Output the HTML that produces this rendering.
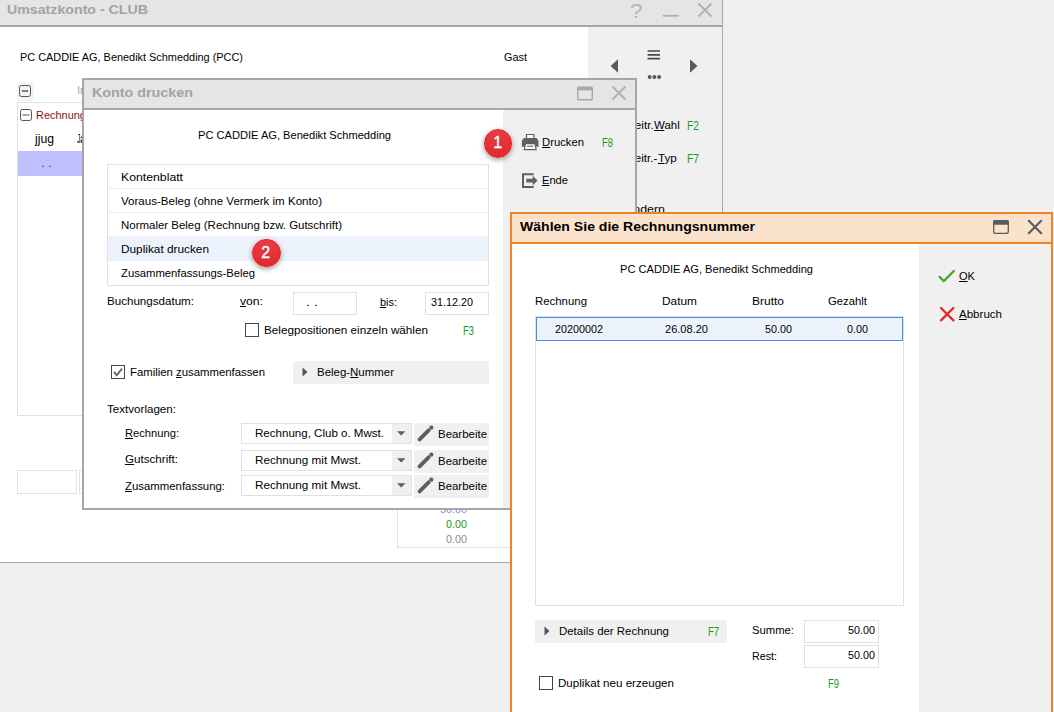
<!DOCTYPE html>
<html lang="de"><head><meta charset="utf-8"><title>Umsatzkonto - CLUB</title>
<style>
html,body{margin:0;padding:0}
body{width:1054px;height:712px;overflow:hidden;background:#f0f0f0;position:relative;font-family:"Liberation Sans", sans-serif;font-size:11px;color:#000}
.b{position:absolute;box-sizing:border-box}
.t{position:absolute;white-space:pre;transform-origin:0 0}
.layer{position:absolute;left:0;top:0;width:1054px;height:712px;overflow:hidden}
.clip{position:absolute;overflow:hidden}
u{text-decoration:underline;text-underline-offset:1px}
.badge{position:absolute;box-sizing:border-box;width:28.6px;height:28.6px;border-radius:50%;border:1.6px solid #f71818;background:linear-gradient(#e63c42,#dd2c33);box-shadow:0 2px 5px rgba(0,0,0,.38);color:#fff;text-align:center}
.badge i{position:absolute;left:0;top:0;width:51px;height:51px;font-style:normal;font-weight:400;-webkit-text-stroke:.7px #fff;font-size:32px;line-height:51px;transform:scale(.5);transform-origin:0 0}
</style></head><body>
<div class="layer" id="main">
<div class="b" style="left:0px;top:0px;width:723px;height:563px;background:#fff;"></div>
<div class="b" style="left:0px;top:0px;width:722px;height:25px;background:#e5e5e5;"></div>
<div class="b" style="left:0px;top:25px;width:723px;height:2px;background:#a6a6a6;"></div>
<div class="b" style="left:722px;top:0px;width:1px;height:563px;background:#a8a8a8;"></div>
<div class="b" style="left:0px;top:562px;width:723px;height:1px;background:#a8a8a8;"></div>
<div class="b" style="left:588px;top:27px;width:134px;height:535px;background:#f0f0f0;"></div>
<svg class="b" style="left:620px;top:0" width="100" height="25" viewBox="0 0 100 25"><text x="10" y="18" font-size="21" fill="#b4b4b4" textLength="12.5" lengthAdjust="spacingAndGlyphs" font-family='"Liberation Sans",sans-serif'>?</text><path d="M43 15.8 H58.8" stroke="#b0b0b0" stroke-width="1.8" fill="none"/><path d="M78.5 3.5 L91.5 16.5 M91.5 3.5 L78.5 16.5" stroke="#b0b0b0" stroke-width="1.9" fill="none"/></svg>
<div class="b" style="left:17px;top:82px;width:17px;height:19px;background:#f4f4f4;"></div>
<div class="b" style="left:17px;top:102px;width:383px;height:314px;background:#fff;border:1px solid #e2e2e2;"></div>
<svg class="b" style="left:18px;top:84px" width="14" height="14" viewBox="0 0 14 14"><rect x="1.5" y="1.5" width="11" height="11" rx="2" fill="#f4f4f4" stroke="#555" stroke-width="1"/><path d="M3.8 7 H10.2" stroke="#707070" stroke-width="1.8"/></svg>
<svg class="b" style="left:19px;top:108px" width="14" height="14" viewBox="0 0 14 14"><rect x="1.5" y="1.5" width="11" height="11" rx="2" fill="#fff" stroke="#555" stroke-width="1"/><path d="M3.4 7 H10.6" stroke="#a4a4a4" stroke-width="1.9"/></svg>
<div class="b" style="left:18px;top:151px;width:182px;height:24.5px;background:#c0c0ff;"></div>
<div class="b" style="left:17px;top:470px;width:60px;height:24px;background:#fff;border:1px solid #e2e2e2;"></div>
<div class="b" style="left:79px;top:470px;width:61px;height:24px;background:#fff;border:1px solid #e2e2e2;"></div>
<div class="b" style="left:397px;top:480px;width:163px;height:68px;background:#fff;border:1px solid #e2e2e2;"></div>
<svg class="b" style="left:600px;top:40px" width="110" height="50" viewBox="0 0 110 50"><path d="M18 19.2 V32.8 L10.6 26 Z" fill="#5a5a5a"/><path d="M90 19.2 V32.8 L97.4 26 Z" fill="#5a5a5a"/><path d="M47.6 11 H60 M47.6 14.8 H60 M47.6 18.6 H60" stroke="#484848" stroke-width="1.7"/><circle cx="49.7" cy="37" r="2" fill="#5a5a5a"/><circle cx="54.4" cy="37" r="2" fill="#5a5a5a"/><circle cx="59.1" cy="37" r="2" fill="#5a5a5a"/></svg>
<span class="t" style="left:7px;top:0.00px;font-size:12.5px;line-height:20px;color:#a3a3a3;font-weight:700;transform:scaleX(1.1342);">Umsatzkonto - CLUB</span>
<span class="t" style="left:20px;top:49.00px;font-size:11px;line-height:16px;transform:scaleX(0.9912);">PC CADDIE AG, Benedikt Schmedding (PCC)</span>
<span class="t" style="left:504px;top:49.00px;font-size:11px;line-height:16px;transform:scaleX(0.9899);">Gast</span>
<span class="t" style="left:76.5px;top:82.00px;font-size:11px;line-height:16px;color:#a8a8a8;transform:scaleX(1.0215);">Inhalt</span>
<span class="t" style="left:35.5px;top:107.00px;font-size:11px;line-height:16px;color:#8a0f0f;transform:scaleX(0.9953);">Rechnungen</span>
<span class="t" style="left:35px;top:131.00px;font-size:12px;line-height:16px;transform:scaleX(1.0167);">jjug</span>
<span class="t" style="left:76.6px;top:131.00px;font-size:12px;line-height:16px;transform:scaleX(0.5667);">J</span>
<span class="t" style="left:80.4px;top:131.00px;font-size:12px;line-height:16px;transform:scaleX(1.0148);">ahr</span>
<span class="t" style="left:41px;top:155.00px;font-size:11px;line-height:16px;color:#2020e0;transform:scaleX(1.1993);">. .</span>
<span class="t" style="left:627px;top:117.00px;font-size:11px;line-height:16px;transform:scaleX(1.0647);">Beitr.</span>
<span class="t" style="left:654px;top:117.00px;font-size:11px;line-height:16px;transform:scaleX(1.0417);"><u>W</u>ahl</span>
<span class="t" style="left:687px;top:116.00px;font-size:12.5px;line-height:20px;color:#1a9a1a;transform:scaleX(0.8223);">F2</span>
<span class="t" style="left:627px;top:150.00px;font-size:11px;line-height:16px;transform:scaleX(1.0580);">Beitr.-</span>
<span class="t" style="left:657.6px;top:150.00px;font-size:11px;line-height:16px;transform:scaleX(1.0592);"><u>T</u>yp</span>
<span class="t" style="left:687px;top:149.00px;font-size:12.5px;line-height:20px;color:#1a9a1a;transform:scaleX(0.8223);">F7</span>
<span class="t" style="left:625px;top:201.00px;font-size:11px;line-height:16px;transform:scaleX(1.1273);">Ändern</span>
<span class="t" style="left:440px;top:501.00px;font-size:11px;line-height:16px;color:#8c8ce0;transform:scaleX(0.9807);">50.00</span>
<span class="t" style="left:446px;top:516.00px;font-size:11px;line-height:16px;color:#1a9a1a;transform:scaleX(0.9803);">0.00</span>
<span class="t" style="left:446px;top:531.00px;font-size:11px;line-height:16px;color:#8a8a8a;transform:scaleX(0.9803);">0.00</span>
</div>
<div class="layer" id="d1">
<div class="b" style="left:82px;top:78px;width:555px;height:432px;background:#a6a6a6;"></div>
<div class="b" style="left:84px;top:80px;width:551px;height:27.7px;background:#e5e5e5;"></div>
<div class="b" style="left:84px;top:109.7px;width:419px;height:398.3px;background:#fff;"></div>
<div class="b" style="left:503px;top:109.7px;width:132px;height:398.3px;background:#f0f0f0;"></div>
<svg class="b" style="left:570px;top:79.5px" width="64" height="27" viewBox="0 0 64 27"><rect x="7.7" y="7.2" width="14.6" height="12.6" rx="1" fill="none" stroke="#a8a8a8" stroke-width="1.4"/><rect x="7.7" y="7.2" width="14.6" height="3.2" fill="#a8a8a8"/><path d="M42.5 6.5 L55.5 19.5 M55.5 6.5 L42.5 19.5" stroke="#b0b0b0" stroke-width="1.9" fill="none"/></svg>
<div class="b" style="left:107px;top:164px;width:382px;height:122px;background:#fff;border:1px solid #e0e0e0;"></div>
<div class="b" style="left:108px;top:188px;width:380px;height:1px;background:#ececec;"></div>
<div class="b" style="left:108px;top:212px;width:380px;height:1px;background:#ececec;"></div>
<div class="b" style="left:108px;top:236px;width:380px;height:1px;background:#ececec;"></div>
<div class="b" style="left:108px;top:260px;width:380px;height:1px;background:#ececec;"></div>
<div class="b" style="left:108px;top:236px;width:380px;height:25px;background:#ebf2fc;"></div>
<div class="b" style="left:293px;top:292px;width:64px;height:23px;background:#fff;border:1px solid #e0e0e0;"></div>
<div class="b" style="left:425px;top:292px;width:64px;height:23px;background:#fff;border:1px solid #e0e0e0;"></div>
<div class="b" style="left:245px;top:323px;width:14px;height:14px;background:#fff;border:1px solid #444;"></div>
<div class="b" style="left:111px;top:365px;width:14px;height:14px;background:#fff;border:1px solid #444;"></div>
<svg class="b" style="left:111px;top:365px" width="14" height="14" viewBox="0 0 14 14"><path d="M3 7 L5.8 10.2 L11 3.6" stroke="#6a6a6a" stroke-width="1.9" fill="none"/></svg>
<div class="b" style="left:293px;top:361px;width:196px;height:23px;background:#f0f0f0;"></div>
<svg class="b" style="left:300px;top:366px" width="10" height="12" viewBox="0 0 10 12"><path d="M2.5 1.5 V10.5 L7.5 6 Z" fill="#555"/></svg>
<div class="b" style="left:241px;top:423px;width:171px;height:21px;background:#fff;border:1px solid #e0e0e0;"></div>
<div class="b" style="left:392px;top:424px;width:19px;height:19px;background:#f0f0f0;"></div>
<svg class="b" style="left:396px;top:430px" width="12" height="8" viewBox="0 0 12 8"><path d="M1 1.2 H9.4 L5.2 5.6 Z" fill="#5e5e5e"/></svg>
<div class="clip" style="left:414px;top:423px;width:75px;height:23px;background:#f0f0f0">
<svg class="b" style="left:2.1px;top:1.4px" width="20" height="20" viewBox="0 0 20 20"><path d="M3.6 15.4 L12.6 6.4" stroke="#5e5e5e" stroke-width="3.9" stroke-linecap="round" fill="none"/><circle cx="15.3" cy="3.7" r="2.1" fill="#5e5e5e"/></svg>
<div class="b" style="left:-414px;top:-423px;width:0;height:0"><span class="t" style="left:438px;top:426.00px;font-size:11px;line-height:16px;transform:scaleX(1.0405);">Bearbeite</span></div>
</div>
<div class="b" style="left:241px;top:450px;width:171px;height:21px;background:#fff;border:1px solid #e0e0e0;"></div>
<div class="b" style="left:392px;top:451px;width:19px;height:19px;background:#f0f0f0;"></div>
<svg class="b" style="left:396px;top:457px" width="12" height="8" viewBox="0 0 12 8"><path d="M1 1.2 H9.4 L5.2 5.6 Z" fill="#5e5e5e"/></svg>
<div class="clip" style="left:414px;top:450px;width:75px;height:23px;background:#f0f0f0">
<svg class="b" style="left:2.1px;top:1.4px" width="20" height="20" viewBox="0 0 20 20"><path d="M3.6 15.4 L12.6 6.4" stroke="#5e5e5e" stroke-width="3.9" stroke-linecap="round" fill="none"/><circle cx="15.3" cy="3.7" r="2.1" fill="#5e5e5e"/></svg>
<div class="b" style="left:-414px;top:-450px;width:0;height:0"><span class="t" style="left:438px;top:453.00px;font-size:11px;line-height:16px;transform:scaleX(1.0405);">Bearbeite</span></div>
</div>
<div class="b" style="left:241px;top:475px;width:171px;height:21px;background:#fff;border:1px solid #e0e0e0;"></div>
<div class="b" style="left:392px;top:476px;width:19px;height:19px;background:#f0f0f0;"></div>
<svg class="b" style="left:396px;top:482px" width="12" height="8" viewBox="0 0 12 8"><path d="M1 1.2 H9.4 L5.2 5.6 Z" fill="#5e5e5e"/></svg>
<div class="clip" style="left:414px;top:475px;width:75px;height:23px;background:#f0f0f0">
<svg class="b" style="left:2.1px;top:1.4px" width="20" height="20" viewBox="0 0 20 20"><path d="M3.6 15.4 L12.6 6.4" stroke="#5e5e5e" stroke-width="3.9" stroke-linecap="round" fill="none"/><circle cx="15.3" cy="3.7" r="2.1" fill="#5e5e5e"/></svg>
<div class="b" style="left:-414px;top:-475px;width:0;height:0"><span class="t" style="left:438px;top:478.00px;font-size:11px;line-height:16px;transform:scaleX(1.0405);">Bearbeite</span></div>
</div>
<svg class="b" style="left:521px;top:133px" width="19" height="19" viewBox="0 0 19 19"><path d="M5.5 1.5 H12.9 V6 H5.5 Z" fill="#fff" stroke="#606060" stroke-width="1.2"/><path d="M0.9 13.8 V8.4 Q0.9 7.5 1.5 6.8 L3 5 H15.4 L16.9 6.8 Q17.5 7.5 17.5 8.4 V13.8 Z" fill="#606060"/><path d="M4.6 10.6 H13.8 L15.2 16.6 H3.2 Z" fill="#fff" stroke="#606060" stroke-width="1.1"/><path d="M6 13.2 H12.4" stroke="#606060" stroke-width="1.1"/></svg>
<svg class="b" style="left:521px;top:172px" width="19" height="19" viewBox="0 0 19 19"><path d="M12.7 2.2 H2 V15 H12.7" fill="none" stroke="#606060" stroke-width="2"/><path d="M5.3 6.8 H11.7 V3.8 L16.5 8.6 L11.7 13.4 V10.4 H5.3 Z" fill="#606060"/></svg>
<span class="t" style="left:91.7px;top:83.00px;font-size:12.5px;line-height:20px;color:#a3a3a3;font-weight:700;transform:scaleX(1.1451);">Konto drucken</span>
<span class="t" style="left:198px;top:127.00px;font-size:11px;line-height:16px;transform:scaleX(1.0085);">PC CADDIE AG, Benedikt Schmedding</span>
<span class="t" style="left:121px;top:169.00px;font-size:11px;line-height:16px;transform:scaleX(1.1140);">Kontenblatt</span>
<span class="t" style="left:121px;top:193.00px;font-size:11px;line-height:16px;transform:scaleX(1.0503);">Voraus-Beleg (ohne Vermerk im Konto)</span>
<span class="t" style="left:121px;top:217.00px;font-size:11px;line-height:16px;transform:scaleX(1.0417);">Normaler Beleg (Rechnung bzw. Gutschrift)</span>
<span class="t" style="left:121px;top:241.00px;font-size:11px;line-height:16px;transform:scaleX(1.0740);">Duplikat drucken</span>
<span class="t" style="left:121px;top:265.00px;font-size:11px;line-height:16px;transform:scaleX(1.0241);">Zusammenfassungs-Beleg</span>
<span class="t" style="left:107px;top:293.00px;font-size:11px;line-height:16px;transform:scaleX(1.0537);">Buchungsdatum:</span>
<span class="t" style="left:240px;top:293.00px;font-size:11px;line-height:16px;transform:scaleX(1.1059);"><u>v</u>on:</span>
<span class="t" style="left:305.5px;top:294.00px;font-size:11px;line-height:16px;transform:scaleX(1.3083);">. .</span>
<span class="t" style="left:380px;top:294.00px;font-size:11px;line-height:16px;transform:scaleX(0.9927);"><u>b</u>is:</span>
<span class="t" style="left:431px;top:294.00px;font-size:11px;line-height:16px;transform:scaleX(0.9807);">31.12.20</span>
<span class="t" style="left:264px;top:322.00px;font-size:11px;line-height:16px;transform:scaleX(1.0641);">Belegpositionen einzeln wählen</span>
<span class="t" style="left:463px;top:321.00px;font-size:12.5px;line-height:20px;color:#1a9a1a;transform:scaleX(0.7537);">F3</span>
<span class="t" style="left:130px;top:364.00px;font-size:11px;line-height:16px;transform:scaleX(1.0318);">Familien <u>z</u>usammenfassen</span>
<span class="t" style="left:317px;top:364.00px;font-size:11px;line-height:16px;transform:scaleX(1.0408);">Beleg-<u>N</u>ummer</span>
<span class="t" style="left:107px;top:401.00px;font-size:11px;line-height:16px;transform:scaleX(1.0544);">Textvorlagen:</span>
<span class="t" style="left:125px;top:425.00px;font-size:11px;line-height:16px;transform:scaleX(1.0147);"><u>R</u>echnung:</span>
<span class="t" style="left:125px;top:451.00px;font-size:11px;line-height:16px;transform:scaleX(1.0570);"><u>G</u>utschrift:</span>
<span class="t" style="left:125px;top:478.00px;font-size:11px;line-height:16px;transform:scaleX(1.0349);"><u>Z</u>usammenfassung:</span>
<span class="t" style="left:255px;top:425.00px;font-size:11px;line-height:16px;transform:scaleX(1.0497);">Rechnung, Club o. Mwst.</span>
<span class="t" style="left:255px;top:452.00px;font-size:11px;line-height:16px;transform:scaleX(1.0637);">Rechnung mit Mwst.</span>
<span class="t" style="left:255px;top:477.00px;font-size:11px;line-height:16px;transform:scaleX(1.0637);">Rechnung mit Mwst.</span>
<span class="t" style="left:542px;top:134.00px;font-size:11px;line-height:16px;transform:scaleX(1.0248);"><u>D</u>rucken</span>
<span class="t" style="left:602px;top:133.00px;font-size:12.5px;line-height:20px;color:#1a9a1a;transform:scaleX(0.7537);">F8</span>
<span class="t" style="left:542px;top:172.00px;font-size:11px;line-height:16px;transform:scaleX(1.0116);"><u>E</u>nde</span>
<div class="badge" style="left:483.8px;top:129px"><i>1</i></div>
<div class="badge" style="left:252.1px;top:238.9px"><i>2</i></div>
</div>
<div class="layer" id="d2">
<div class="b" style="left:510px;top:212px;width:543px;height:508px;background:#ef8420;"></div>
<div class="b" style="left:512px;top:214px;width:539px;height:27.8px;background:#fbe2cc;"></div>
<div class="b" style="left:512px;top:244px;width:407px;height:476px;background:#fff;"></div>
<div class="b" style="left:919px;top:244px;width:132px;height:476px;background:#f0f0f0;"></div>
<svg class="b" style="left:986px;top:214px" width="64" height="27" viewBox="0 0 64 27"><rect x="7.7" y="6.7" width="14.6" height="12.6" rx="1.6" fill="none" stroke="#5c5c5c" stroke-width="1.3"/><path d="M7.7 10 V8.3 Q7.7 6.7 9.3 6.7 H20.7 Q22.3 6.7 22.3 8.3 V10 Z" fill="#5c5c5c" stroke="#5c5c5c" stroke-width="1.3"/><path d="M42.8 6.8 L55.2 19.2 M55.2 6.8 L42.8 19.2" stroke="#5c5c5c" stroke-width="2.2" stroke-linecap="round" fill="none"/></svg>
<div class="b" style="left:535px;top:316px;width:369px;height:290px;background:#fff;border:1px solid #e0e0e0;"></div>
<div class="b" style="left:536px;top:317px;width:367px;height:24px;background:#ecf3fd;border:1px solid #4a8fe6;"></div>
<svg class="b" style="left:937px;top:268px" width="20" height="16" viewBox="0 0 20 16"><path d="M2.6 8.8 L6.8 13 L16.8 3" stroke="#4aa82a" stroke-width="2.4" stroke-linecap="round" fill="none"/></svg>
<svg class="b" style="left:937px;top:305px" width="20" height="18" viewBox="0 0 20 18"><path d="M4 3 L16.4 15.4 M16.4 3 L4 15.4" stroke="#e0282e" stroke-width="2.3" stroke-linecap="round" fill="none"/></svg>
<div class="b" style="left:535px;top:620px;width:192px;height:23px;background:#f0f0f0;"></div>
<svg class="b" style="left:542px;top:625px" width="10" height="12" viewBox="0 0 10 12"><path d="M2.5 1.5 V10.5 L7.5 6 Z" fill="#555"/></svg>
<div class="b" style="left:804px;top:620px;width:75px;height:23px;background:#fff;border:1px solid #e0e0e0;"></div>
<div class="b" style="left:804px;top:645px;width:75px;height:23px;background:#fff;border:1px solid #e0e0e0;"></div>
<div class="b" style="left:539px;top:676px;width:14px;height:14px;background:#fff;border:1px solid #444;"></div>
<span class="t" style="left:520px;top:217.00px;font-size:12.5px;line-height:20px;font-weight:700;transform:scaleX(1.1240);">Wählen Sie die Rechnungsnummer</span>
<span class="t" style="left:620px;top:261.00px;font-size:11px;line-height:16px;transform:scaleX(1.0085);">PC CADDIE AG, Benedikt Schmedding</span>
<span class="t" style="left:535px;top:293.00px;font-size:11px;line-height:16px;transform:scaleX(1.0368);">Rechnung</span>
<span class="t" style="left:662px;top:293.00px;font-size:11px;line-height:16px;transform:scaleX(1.0800);">Datum</span>
<span class="t" style="left:752px;top:293.00px;font-size:11px;line-height:16px;transform:scaleX(1.0899);">Brutto</span>
<span class="t" style="left:828px;top:293.00px;font-size:11px;line-height:16px;transform:scaleX(1.0284);">Gezahlt</span>
<span class="t" style="left:555px;top:321.00px;font-size:11px;line-height:16px;transform:scaleX(0.9805);">20200002</span>
<span class="t" style="left:665px;top:321.00px;font-size:11px;line-height:16px;transform:scaleX(1.0040);">26.08.20</span>
<span class="t" style="left:765px;top:321.00px;font-size:11px;line-height:16px;transform:scaleX(0.9807);">50.00</span>
<span class="t" style="left:847px;top:321.00px;font-size:11px;line-height:16px;transform:scaleX(0.9803);">0.00</span>
<span class="t" style="left:959px;top:268.00px;font-size:11px;line-height:16px;transform:scaleX(1.0059);"><u>O</u>K</span>
<span class="t" style="left:959px;top:306.00px;font-size:11px;line-height:16px;transform:scaleX(1.0492);"><u>A</u>bbruch</span>
<span class="t" style="left:559px;top:623.00px;font-size:11px;line-height:16px;transform:scaleX(1.0397);">Details der Rechnung</span>
<span class="t" style="left:708px;top:622.00px;font-size:12.5px;line-height:20px;color:#1a9a1a;transform:scaleX(0.7537);">F7</span>
<span class="t" style="left:752px;top:622.00px;font-size:11px;line-height:16px;transform:scaleX(1.0252);">Summe:</span>
<span class="t" style="left:848px;top:622.00px;font-size:11px;line-height:16px;transform:scaleX(0.9807);">50.00</span>
<span class="t" style="left:752px;top:648.00px;font-size:11px;line-height:16px;transform:scaleX(0.9732);">Rest:</span>
<span class="t" style="left:848px;top:647.00px;font-size:11px;line-height:16px;transform:scaleX(0.9807);">50.00</span>
<span class="t" style="left:558px;top:675.00px;font-size:11px;line-height:16px;transform:scaleX(1.0538);">Duplikat neu erzeugen</span>
<span class="t" style="left:828px;top:674.00px;font-size:12.5px;line-height:20px;color:#1a9a1a;transform:scaleX(0.7537);">F9</span>
</div>
</body></html>
